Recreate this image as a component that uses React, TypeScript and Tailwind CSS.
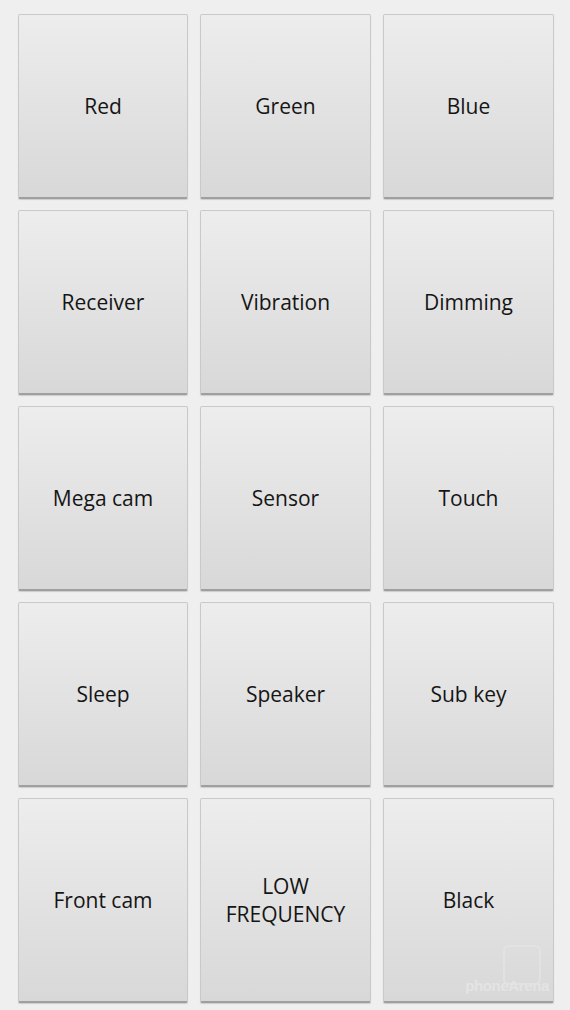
const tiles: string[][] = [
  ["Red"],
  ["Green"],
  ["Blue"],
  ["Receiver"],
  ["Vibration"],
  ["Dimming"],
  ["Mega cam"],
  ["Sensor"],
  ["Touch"],
  ["Sleep"],
  ["Speaker"],
  ["Sub key"],
  ["Front cam"],
  ["LOW", "FREQUENCY"],
  ["Black"],
];

function Tile({ lines, mark }: { lines: string[]; mark?: boolean }) {
  return (
    <div className="relative flex flex-col items-center justify-center rounded-[2px] border border-[#c9c9c9] border-b-[#9f9f9f] border-b-2 bg-gradient-to-b from-[#ededed] to-[#d8d8d8] shadow-[0_1px_1px_rgba(0,0,0,0.15)]">
      {lines.map((l) => (
        <span
          key={l}
          className="text-[21px] leading-[28px] font-medium text-[#151515] font-['Open_Sans',sans-serif]"
        >
          {l}
        </span>
      ))}
      {mark && (
        <div className="absolute bottom-1 right-1 flex items-end">
          <span className="text-[15px] font-bold text-[#e4e4e4] font-['Liberation_Sans',sans-serif] tracking-tight">
            phoneArena
          </span>
          <div className="absolute right-2 bottom-3 h-[40px] w-[38px] rounded-md border-2 border-[#e2e2e2]" />
        </div>
      )}
    </div>
  );
}

export default function App() {
  return (
    <div className="h-[1010px] w-[570px] overflow-hidden bg-[#efefef] pt-[14px] pl-[18px]">
      <div className="grid grid-cols-[170px_171px_171px] grid-rows-[185px_185px_185px_185px_205px] gap-x-[12px] gap-y-[11px]">
        {tiles.map((t, i) => (
          <Tile key={i} lines={t} mark={i === 14} />
        ))}
      </div>
    </div>
  );
}
